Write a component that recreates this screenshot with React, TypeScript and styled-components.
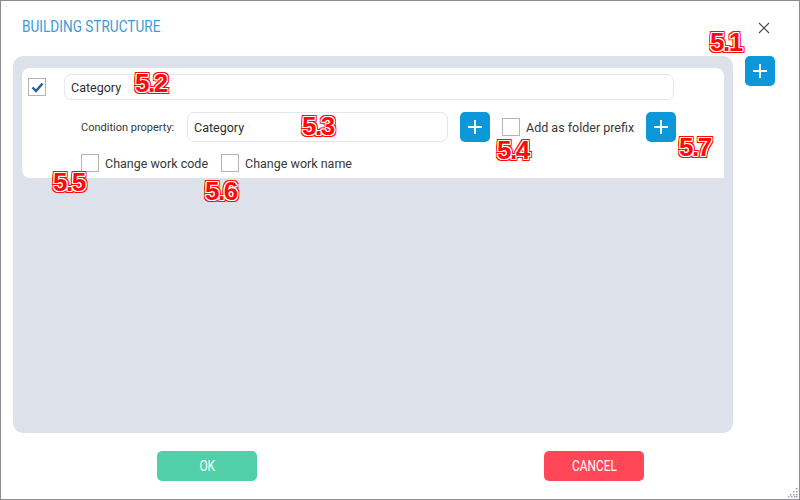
import React, { FC } from 'react';
import styled, { createGlobalStyle } from 'styled-components';

const GlobalStyle = createGlobalStyle`
  html, body {
    margin: 0;
    padding: 0;
    background: #ffffff;
  }
  * {
    box-sizing: border-box;
  }
`

const Window = styled.div`
  position: relative;
  width: 800px;
  height: 500px;
  border: 1px solid #8c8c8c;
  background: #ffffff;
  display: flex;
  flex-direction: column;
  font-family: Roboto, "Liberation Sans", sans-serif;
  color: #333333;
`

const Header = styled.div`
  height: 55px;
  display: flex;
  align-items: flex-start;
  justify-content: space-between;
  padding: 17px 29px 0 21px;
`

// the app font is a narrow one; none is installed, so Roboto is squeezed
const Narrow = styled.span`
  display: inline-block;
  transform: scaleX(0.85);
`

const Title = styled.h1`
  margin: 0;
  font-family: Roboto, sans-serif;
  font-weight: 400;
  font-size: 16px;
  line-height: 18px;
  color: #3c9ad6;
  ${Narrow} {
    transform-origin: left center;
  }
`

const CloseButton = styled.button`
  border: none;
  background: none;
  padding: 0;
  margin-top: 4px;
  width: 12px;
  height: 12px;
  display: flex;
  cursor: pointer;
`

const Body = styled.div`
  display: flex;
  align-items: flex-start;
  gap: 12px;
  padding-left: 12px;
`

const Panel = styled.div`
  width: 720px;
  height: 377px;
  background: #dde1ea;
  border-radius: 10px;
  padding: 12px 9px;
`

const Card = styled.div`
  background: #ffffff;
  border-radius: 8px 8px 0 8px;
  padding: 6px 6px 6px 6px;
  display: flex;
  flex-direction: column;
  gap: 12px;
`

const Row = styled.div<{ $indent?: number }>`
  display: flex;
  align-items: center;
  padding-left: ${p => p.$indent || 0}px;
`

const Box = styled.span<{ $gap?: number }>`
  width: 18px;
  height: 18px;
  flex-shrink: 0;
  border: 1px solid #b4b4b4;
  background: #ffffff;
  display: flex;
  align-items: center;
  justify-content: center;
  margin-right: ${p => p.$gap ?? 6}px;
`

const TextInput = styled.div<{ $width: number; $height: number }>`
  width: ${p => p.$width}px;
  height: ${p => p.$height}px;
  border: 1px solid #e4e6eb;
  border-radius: 7px;
  padding-left: 6px;
  display: flex;
  align-items: center;
  font-size: 12.5px;
  color: #2e2e2e;
`

const FieldLabel = styled.span`
  width: 106px;
  font-size: 11px;
  color: #383838;
`

const CheckText = styled.span<{ $gap?: number }>`
  font-size: 12.5px;
  color: #383838;
  margin-right: ${p => p.$gap || 0}px;
  white-space: nowrap;
`

const PlusButton = styled.button<{ $gap?: number }>`
  width: 30px;
  height: 30px;
  flex-shrink: 0;
  border: none;
  border-radius: 5px;
  background: #0b97d8;
  display: flex;
  align-items: center;
  justify-content: center;
  padding: 0;
  margin-left: ${p => p.$gap || 0}px;
  margin-right: ${p => p.$gap || 0}px;
  cursor: pointer;
`

const Footer = styled.div`
  display: flex;
  padding: 18px 0 0 156px;
  gap: 287px;
`

const ActionButton = styled.button<{ $color: string }>`
  width: 100px;
  height: 30px;
  border: none;
  border-radius: 5px;
  background: ${p => p.$color};
  color: #ffffff;
  font-family: Roboto, sans-serif;
  font-weight: 400;
  font-size: 14px;
  padding: 0;
  display: flex;
  align-items: center;
  justify-content: center;
  cursor: pointer;
`

const Grip = styled.svg`
  position: absolute;
  right: 1px;
  bottom: 1px;
`

const Marker = styled.span<{ $x: number; $y: number }>`
  position: absolute;
  left: ${p => p.$x}px;
  top: ${p => p.$y}px;
  font-family: "Liberation Sans", Arial, sans-serif;
  font-weight: 700;
  font-size: 26px;
  line-height: 22px;
  letter-spacing: -1.5px;
  color: #ff0a0a;
  text-shadow:
    1px 0 0 #fff, -1px 0 0 #fff, 0 1px 0 #fff, 0 -1px 0 #fff,
    1px 1px 0 #fff, -1px -1px 0 #fff, 1px -1px 0 #fff, -1px 1px 0 #fff,
    2px 0 0 #ff0a0a, -2px 0 0 #ff0a0a, 0 2px 0 #ff0a0a, 0 -2px 0 #ff0a0a,
    2px 2px 0 #ff0a0a, -2px -2px 0 #ff0a0a, 2px -2px 0 #ff0a0a, -2px 2px 0 #ff0a0a;
  pointer-events: none;
`

const Plus: FC = () => (
  <svg width="14" height="14" viewBox="0 0 14 14">
    <path d="M7 0v14M0 7h14" stroke="#ffffff" strokeWidth="2" />
  </svg>
)

const Check: FC = () => (
  <svg width="13" height="11" viewBox="0 0 13 11">
    <path d="M1.5 5.5l3.5 3.5 6.5-7.5" stroke="#1b5fa6" strokeWidth="2.4" fill="none" />
  </svg>
)

const markers = [
  { label: '5.1', x: 709, y: 30 },
  { label: '5.2', x: 134, y: 71 },
  { label: '5.3', x: 301, y: 114 },
  { label: '5.4', x: 496, y: 138 },
  { label: '5.5', x: 52, y: 170 },
  { label: '5.6', x: 204, y: 179 },
  { label: '5.7', x: 678, y: 135 },
]

const App: FC = () => {
  return (
    <>
      <GlobalStyle />
      <Window>
        <Header>
          <Title><Narrow>BUILDING STRUCTURE</Narrow></Title>
          <CloseButton aria-label="close">
            <svg width="12" height="12" viewBox="0 0 12 12">
              <path d="M1 1l10 10M11 1L1 11" stroke="#444" strokeWidth="1.1" />
            </svg>
          </CloseButton>
        </Header>
        <Body>
          <Panel>
            <Card>
              <Row>
                <Box $gap={18}><Check /></Box>
                <TextInput $width={610} $height={26}>Category</TextInput>
              </Row>
              <Row $indent={53}>
                <FieldLabel>Condition property:</FieldLabel>
                <TextInput $width={261} $height={30}>Category</TextInput>
                <PlusButton $gap={12}><Plus /></PlusButton>
                <Box />
                <CheckText $gap={12}>Add as folder prefix</CheckText>
                <PlusButton><Plus /></PlusButton>
              </Row>
              <Row $indent={53}>
                <Box />
                <CheckText $gap={13}>Change work code</CheckText>
                <Box />
                <CheckText>Change work name</CheckText>
              </Row>
            </Card>
          </Panel>
          <PlusButton><Plus /></PlusButton>
        </Body>
        <Footer>
          <ActionButton $color="#51cfa9"><Narrow>OK</Narrow></ActionButton>
          <ActionButton $color="#ff4757"><Narrow>CANCEL</Narrow></ActionButton>
        </Footer>
        <Grip width="10" height="10" viewBox="0 0 10 10">
          {[[8, 0], [5, 3], [8, 3], [2, 6], [5, 6], [8, 6], [0, 8], [3, 8], [6, 8], [8, 8]].map(([x, y], i) => (
            <rect key={i} x={x} y={y} width="1.5" height="1.5" fill="#9aa0b8" />
          ))}
        </Grip>
        {markers.map(m => (
          <Marker key={m.label} $x={m.x} $y={m.y}>{m.label}</Marker>
        ))}
      </Window>
    </>
  );
}

export default App;
